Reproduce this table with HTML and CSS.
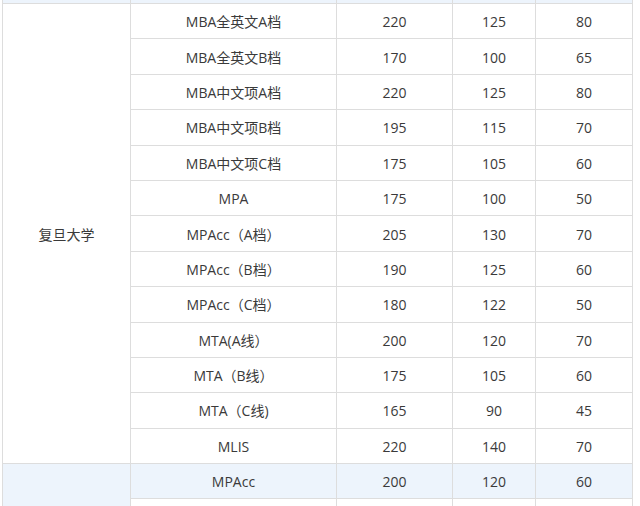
FILE: index.html
```html
<!DOCTYPE html>
<html>
<head>
<meta charset="utf-8">
<link rel="stylesheet" href="styles.css">
</head>
<body>
<table class="score">
  <colgroup>
    <col class="c1"><col class="c2"><col class="c3"><col class="c4"><col class="c5">
  </colgroup>
  <tr class="prev"><td></td><td></td><td></td><td></td><td></td></tr>
  <tr><td class="school" rowspan="13">复旦大学</td><td>MBA全英文A档</td><td>220</td><td>125</td><td>80</td></tr>
  <tr><td>MBA全英文B档</td><td>170</td><td>100</td><td>65</td></tr>
  <tr><td>MBA中文项A档</td><td>220</td><td>125</td><td>80</td></tr>
  <tr><td>MBA中文项B档</td><td>195</td><td>115</td><td>70</td></tr>
  <tr><td>MBA中文项C档</td><td>175</td><td>105</td><td>60</td></tr>
  <tr><td>MPA</td><td>175</td><td>100</td><td>50</td></tr>
  <tr><td>MPAcc（A档）</td><td>205</td><td>130</td><td>70</td></tr>
  <tr><td>MPAcc（B档）</td><td>190</td><td>125</td><td>60</td></tr>
  <tr><td>MPAcc（C档）</td><td>180</td><td>122</td><td>50</td></tr>
  <tr><td>MTA(A线）</td><td>200</td><td>120</td><td>70</td></tr>
  <tr><td>MTA（B线）</td><td>175</td><td>105</td><td>60</td></tr>
  <tr><td>MTA（C线)</td><td>165</td><td>90</td><td>45</td></tr>
  <tr><td>MLIS</td><td>220</td><td>140</td><td>70</td></tr>
  <tr class="hl"><td class="school" rowspan="2"></td><td>MPAcc</td><td>200</td><td>120</td><td>60</td></tr>
  <tr class="next"><td></td><td></td><td></td><td></td></tr>
</table>
</body>
</html>
```

FILE: styles.css
```css
html, body {
  margin: 0;
  padding: 0;
  background: #ffffff;
}
body {
  padding-left: 2px;
  font-family: "Open Sans", "Noto Sans CJK SC", sans-serif;
  font-size: 14px;
  color: #3a3a3a;
}
.score {
  border-collapse: collapse;
  table-layout: fixed;
  width: 630px;
}
.c1 { width: 128px; }
.c2 { width: 206px; }
.c3 { width: 116px; }
.c4 { width: 83px; }
.c5 { width: 97px; }
.score td {
  border: 1px solid #dddddd;
  text-align: center;
  vertical-align: middle;
  padding: 2px 0 0;
  height: 32.4px;
  line-height: 18px;
}
.score tr td.school { background: #ffffff; }
.score .prev td {
  height: 3px;
  padding: 0;
  background: #edf4fc;
  border-top: none;
}
.score .hl td { background: #edf4fc; }
.score .hl td.school { background: #edf4fc; }
.score .next td { height: 10px; padding: 0; }
```
